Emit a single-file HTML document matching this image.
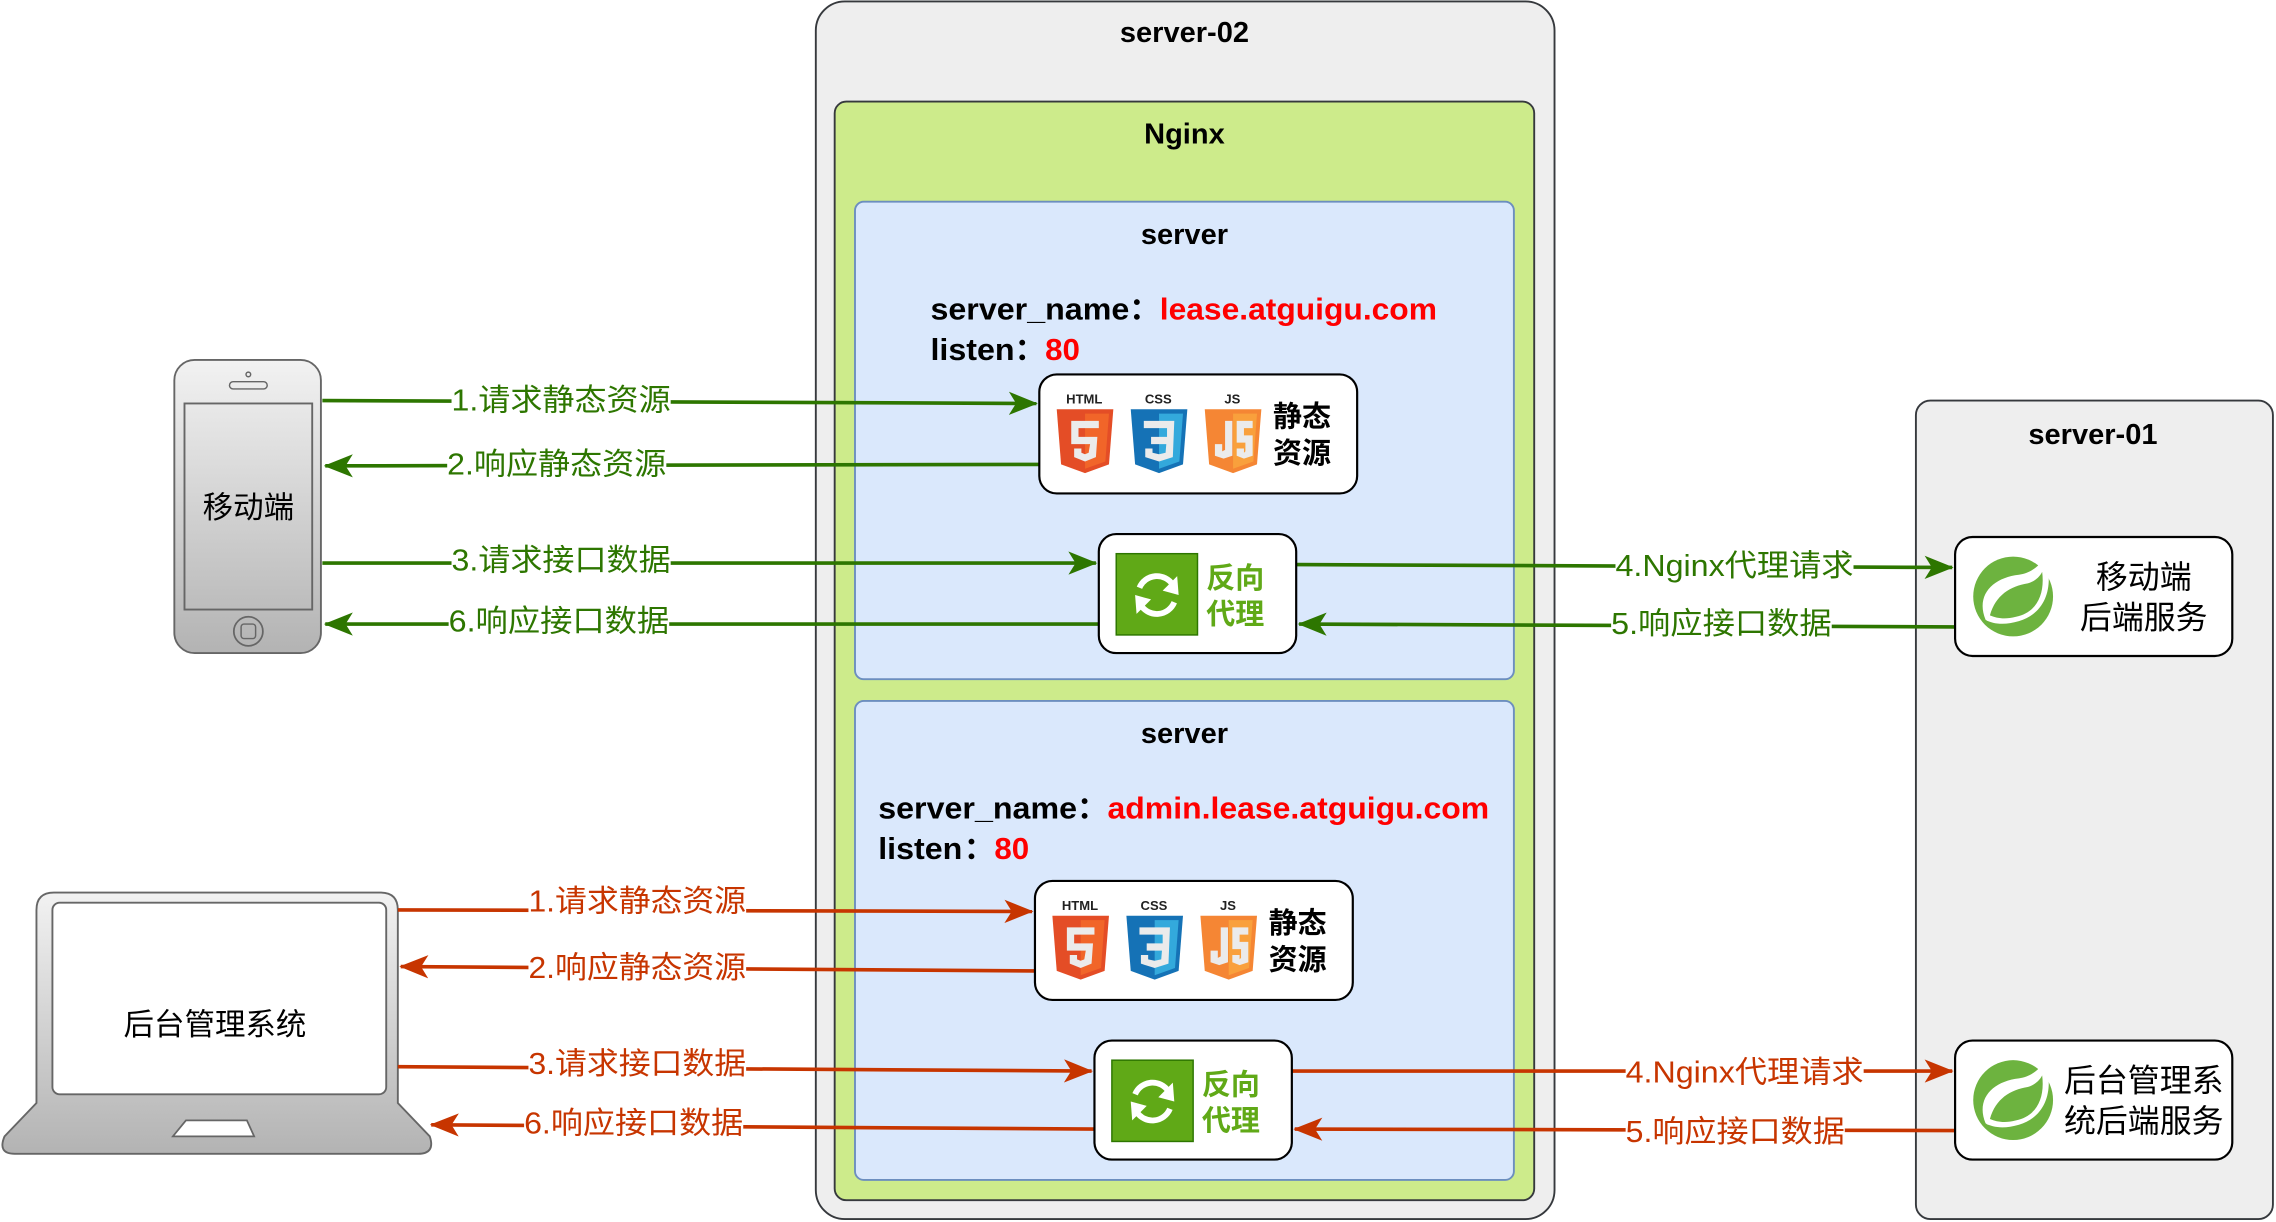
<!DOCTYPE html>
<html><head><meta charset="utf-8"><style>
html,body{margin:0;padding:0;background:#fff;}
svg{display:block;}
text{font-family:"Liberation Sans","Noto Sans CJK SC",sans-serif;}
</style></head><body>
<svg width="2276" height="1222" viewBox="0 0 1568 842" xmlns="http://www.w3.org/2000/svg">
<defs>
<linearGradient id="gg" x1="0" y1="0" x2="0" y2="1"><stop offset="0" stop-color="#f2f2f2"/><stop offset="1" stop-color="#b3b3b3"/></linearGradient>
<symbol id="stat" overflow="visible">
  <rect x="0" y="0" width="219" height="82" rx="12" fill="#fff" stroke="#000" stroke-width="1.5"/>
  <text x="31" y="20" font-size="9" font-weight="bold" text-anchor="middle" fill="#222">HTML</text>
  <polygon points="12,24 51,24 48,62 31.5,68 15,62" fill="#e44d26"/>
  <polygon points="31.5,27 48,27 45.5,60 31.5,65" fill="#f16529"/>
  <path d="M22,32 H41 V37 H27 V43 H40 L39,57 L31.5,60 L24,57 V51 H29 V54 L31.5,55 L34,54 L35,48 H22 Z" fill="#ebebeb"/>
  <text x="82" y="20" font-size="9" font-weight="bold" text-anchor="middle" fill="#222">CSS</text>
  <polygon points="63,24 102,24 99,62 82.5,68 66,62" fill="#1572b6"/>
  <polygon points="82.5,27 99,27 96.5,60 82.5,65" fill="#33a9dc"/>
  <path d="M72,32 H93 L92,57 L82.5,60 L73,57 V51 H78 V54 L82.5,55 L87,54 L87.5,48 H77 V43 H88 V37 H72 Z" fill="#ebebeb"/>
  <text x="133" y="20" font-size="9" font-weight="bold" text-anchor="middle" fill="#222">JS</text>
  <polygon points="114,24 153,24 150,62 133.5,68 117,62" fill="#f58634"/>
  <polygon points="133.5,27 150,27 147.5,60 133.5,65" fill="#f9a03c"/>
  <path d="M128,32 H133 V56 L127,58 L121,56 V48 H126 V53 L128,52 Z M136,32 H147 V37 H141 V42 H147 V56 L141,58 L136,56 V51 H141 V54 L142,53 V47 H136 Z" fill="#ebebeb"/>
  <text x="161" y="36" font-size="20" font-weight="bold" fill="#000">静态</text>
  <text x="161" y="61" font-size="20" font-weight="bold" fill="#000">资源</text>
</symbol>
<symbol id="prox" overflow="visible">
  <rect x="0" y="0" width="136" height="82" rx="12" fill="#fff" stroke="#000" stroke-width="1.5"/>
  <rect x="12" y="13.5" width="56" height="56" fill="#60a917" stroke="#2d7600" stroke-width="1"/>
  <path d="M28,37 A13,13 0 0 1 51,35" fill="none" stroke="#fff" stroke-width="4"/>
  <polygon points="54,29 55,42 44,39" fill="#fff"/>
  <path d="M52,47 A13,13 0 0 1 29,49" fill="none" stroke="#fff" stroke-width="4"/>
  <polygon points="26,55 25,42 36,45" fill="#fff"/>
  <text x="74" y="37" font-size="20" font-weight="bold" fill="#60a917">反向</text>
  <text x="74" y="62" font-size="20" font-weight="bold" fill="#60a917">代理</text>
</symbol>
<symbol id="leaf" overflow="visible">
  <circle cx="40" cy="41" r="27.5" fill="#6db33f"/>
  <path d="M21,57 C14,40 26,28 44,26 C52,25 58,20 62,14 C68,32 64,52 44,58 C34,61 26,60 21,57 Z" fill="#fff"/>
  <path d="M24,54 C28,40 38,34 50,32 C54,31 58,28 60,24 C62,40 56,52 42,55 C34,57 29,56 24,54 Z" fill="#6db33f"/>
  <circle cx="23" cy="56" r="2" fill="#fff"/>
</symbol>
<marker id="ag" viewBox="0 0 20 16" refX="19" refY="8" markerWidth="20" markerHeight="16" markerUnits="userSpaceOnUse" orient="auto"><path d="M0,0 L20,8 L0,16 L5,8 Z" fill="#2d7600"/></marker>
<marker id="ar" viewBox="0 0 20 16" refX="19" refY="8" markerWidth="20" markerHeight="16" markerUnits="userSpaceOnUse" orient="auto"><path d="M0,0 L20,8 L0,16 L5,8 Z" fill="#c73500"/></marker>
</defs>

<rect x="562" y="1" width="509" height="839" rx="20" fill="#eeeeee" stroke="#36393d" stroke-width="1.3"/>
<text x="816" y="29" font-size="20" font-weight="bold" text-anchor="middle">server-02</text>
<rect x="575" y="70" width="482" height="757" rx="8" fill="#cdeb8b" stroke="#36393d" stroke-width="1.3"/>
<text x="816" y="99" font-size="20" font-weight="bold" text-anchor="middle">Nginx</text>
<rect x="589" y="139" width="454" height="329" rx="6" fill="#dae8fc" stroke="#6c8ebf" stroke-width="1.3"/>
<text x="816" y="168" font-size="20" font-weight="bold" text-anchor="middle">server</text>
<text x="641" y="220" font-size="21" font-weight="bold" textLength="137" lengthAdjust="spacingAndGlyphs">server_name</text>
<text x="778" y="220" font-size="21" font-weight="bold">：</text>
<text x="799" y="220" font-size="21" font-weight="bold" fill="#ff0000" textLength="191" lengthAdjust="spacingAndGlyphs">lease.atguigu.com</text>
<text x="641" y="248" font-size="21" font-weight="bold" textLength="58" lengthAdjust="spacingAndGlyphs">listen</text>
<text x="699" y="248" font-size="21" font-weight="bold">：</text>
<text x="720" y="248" font-size="21" font-weight="bold" fill="#ff0000" textLength="24" lengthAdjust="spacingAndGlyphs">80</text>
<rect x="589" y="483" width="454" height="330" rx="6" fill="#dae8fc" stroke="#6c8ebf" stroke-width="1.3"/>
<text x="816" y="512" font-size="20" font-weight="bold" text-anchor="middle">server</text>
<text x="605" y="564" font-size="21" font-weight="bold" textLength="137" lengthAdjust="spacingAndGlyphs">server_name</text>
<text x="742" y="564" font-size="21" font-weight="bold">：</text>
<text x="763" y="564" font-size="21" font-weight="bold" fill="#ff0000" textLength="263" lengthAdjust="spacingAndGlyphs">admin.lease.atguigu.com</text>
<text x="605" y="592" font-size="21" font-weight="bold" textLength="58" lengthAdjust="spacingAndGlyphs">listen</text>
<text x="664" y="592" font-size="21" font-weight="bold">：</text>
<text x="685" y="592" font-size="21" font-weight="bold" fill="#ff0000" textLength="24" lengthAdjust="spacingAndGlyphs">80</text>

<rect x="1320" y="276" width="246" height="564" rx="10" fill="#eeeeee" stroke="#36393d" stroke-width="1.3"/>
<text x="1442" y="306" font-size="20" font-weight="bold" text-anchor="middle">server-01</text>

<rect x="120" y="248" width="101" height="202" rx="14" fill="url(#gg)" stroke="#666" stroke-width="1.3"/>
<rect x="127" y="278" width="88" height="142" fill="none" stroke="#666" stroke-width="1.3"/>
<circle cx="171" cy="258" r="1.6" fill="none" stroke="#666"/>
<rect x="158" y="263" width="26" height="5" rx="2.5" fill="none" stroke="#666"/>
<circle cx="171" cy="435" r="10" fill="none" stroke="#666" stroke-width="1.2"/>
<rect x="166" y="430" width="10" height="10" rx="2" fill="none" stroke="#666"/>
<text x="171" y="357" font-size="21" text-anchor="middle">移动端</text>

<path d="M25,760 V627 Q25,615 37,615 H262 Q274,615 274,627 V760 L296,783 Q300,795 288,795 H10 Q-2,795 3,783 Z" fill="url(#gg)" stroke="#666" stroke-width="1.3"/>
<rect x="36" y="622" width="230" height="132" rx="5" fill="#fff" stroke="#666" stroke-width="1.3"/>
<polygon points="128,772 170,772 175,783 119,783" fill="#fff" stroke="#666" stroke-width="1.2"/>
<text x="148" y="713" font-size="21" text-anchor="middle">后台管理系统</text>

<g stroke="#2d7600" stroke-width="2.5" fill="none">
<path d="M222,276 L714,278" marker-end="url(#ag)"/>
<path d="M716,320 L224,321" marker-end="url(#ag)"/>
<path d="M222,388 L755,388" marker-end="url(#ag)"/>
<path d="M757,430 L224,430" marker-end="url(#ag)"/>
<path d="M893,389 L1345,391" marker-end="url(#ag)"/>
<path d="M1347,432 L895,430" marker-end="url(#ag)"/>
</g>
<g stroke="#c73500" stroke-width="2.5" fill="none">
<path d="M274,627 L711,628" marker-end="url(#ar)"/>
<path d="M713,669 L276,666" marker-end="url(#ar)"/>
<path d="M274,735 L752,738" marker-end="url(#ar)"/>
<path d="M754,778 L297,775" marker-end="url(#ar)"/>
<path d="M890,738 L1345,738" marker-end="url(#ar)"/>
<path d="M1347,779 L892,778" marker-end="url(#ar)"/>
</g>

<g font-size="21" lengthAdjust="spacingAndGlyphs">
<g fill="#2d7600">
<rect x="311" y="264" width="151" height="24" fill="#fff"/><text x="311" y="283" textLength="151" lengthAdjust="spacingAndGlyphs">1.请求静态资源</text>
<rect x="308" y="308" width="151" height="24" fill="#fff"/><text x="308" y="327" textLength="151" lengthAdjust="spacingAndGlyphs">2.响应静态资源</text>
<rect x="311" y="374" width="151" height="24" fill="#fff"/><text x="311" y="393" textLength="151" lengthAdjust="spacingAndGlyphs">3.请求接口数据</text>
<rect x="309" y="416" width="152" height="24" fill="#fff"/><text x="309" y="435" textLength="152" lengthAdjust="spacingAndGlyphs">6.响应接口数据</text>
<rect x="1113" y="378" width="164" height="24" fill="#fff"/><text x="1113" y="397" textLength="164" lengthAdjust="spacingAndGlyphs">4.Nginx代理请求</text>
<rect x="1110" y="418" width="152" height="24" fill="#fff"/><text x="1110" y="437" textLength="152" lengthAdjust="spacingAndGlyphs">5.响应接口数据</text>
</g>
<g fill="#c73500">
<rect x="364" y="609" width="150" height="24" fill="#fff"/><text x="364" y="628" textLength="150" lengthAdjust="spacingAndGlyphs">1.请求静态资源</text>
<rect x="364" y="655" width="150" height="24" fill="#fff"/><text x="364" y="674" textLength="150" lengthAdjust="spacingAndGlyphs">2.响应静态资源</text>
<rect x="364" y="721" width="150" height="24" fill="#fff"/><text x="364" y="740" textLength="150" lengthAdjust="spacingAndGlyphs">3.请求接口数据</text>
<rect x="361" y="762" width="151" height="24" fill="#fff"/><text x="361" y="781" textLength="151" lengthAdjust="spacingAndGlyphs">6.响应接口数据</text>
<rect x="1120" y="727" width="164" height="24" fill="#fff"/><text x="1120" y="746" textLength="164" lengthAdjust="spacingAndGlyphs">4.Nginx代理请求</text>
<rect x="1120" y="768" width="151" height="24" fill="#fff"/><text x="1120" y="787" textLength="151" lengthAdjust="spacingAndGlyphs">5.响应接口数据</text>
</g>
</g>

<use href="#stat" x="716" y="258"/>
<use href="#prox" x="757" y="368"/>
<use href="#stat" x="713" y="607"/>
<use href="#prox" x="754" y="717"/>

<rect x="1347" y="370" width="191" height="82" rx="12" fill="#fff" stroke="#000" stroke-width="1.5"/>
<use href="#leaf" x="1347" y="370"/>
<text x="1477" y="405" font-size="22" text-anchor="middle">移动端</text>
<text x="1477" y="433" font-size="22" text-anchor="middle">后端服务</text>
<rect x="1347" y="717" width="191" height="82" rx="12" fill="#fff" stroke="#000" stroke-width="1.5"/>
<use href="#leaf" x="1347" y="717"/>
<text x="1477" y="752" font-size="22" text-anchor="middle">后台管理系</text>
<text x="1477" y="780" font-size="22" text-anchor="middle">统后端服务</text>
</svg>
</body></html>
